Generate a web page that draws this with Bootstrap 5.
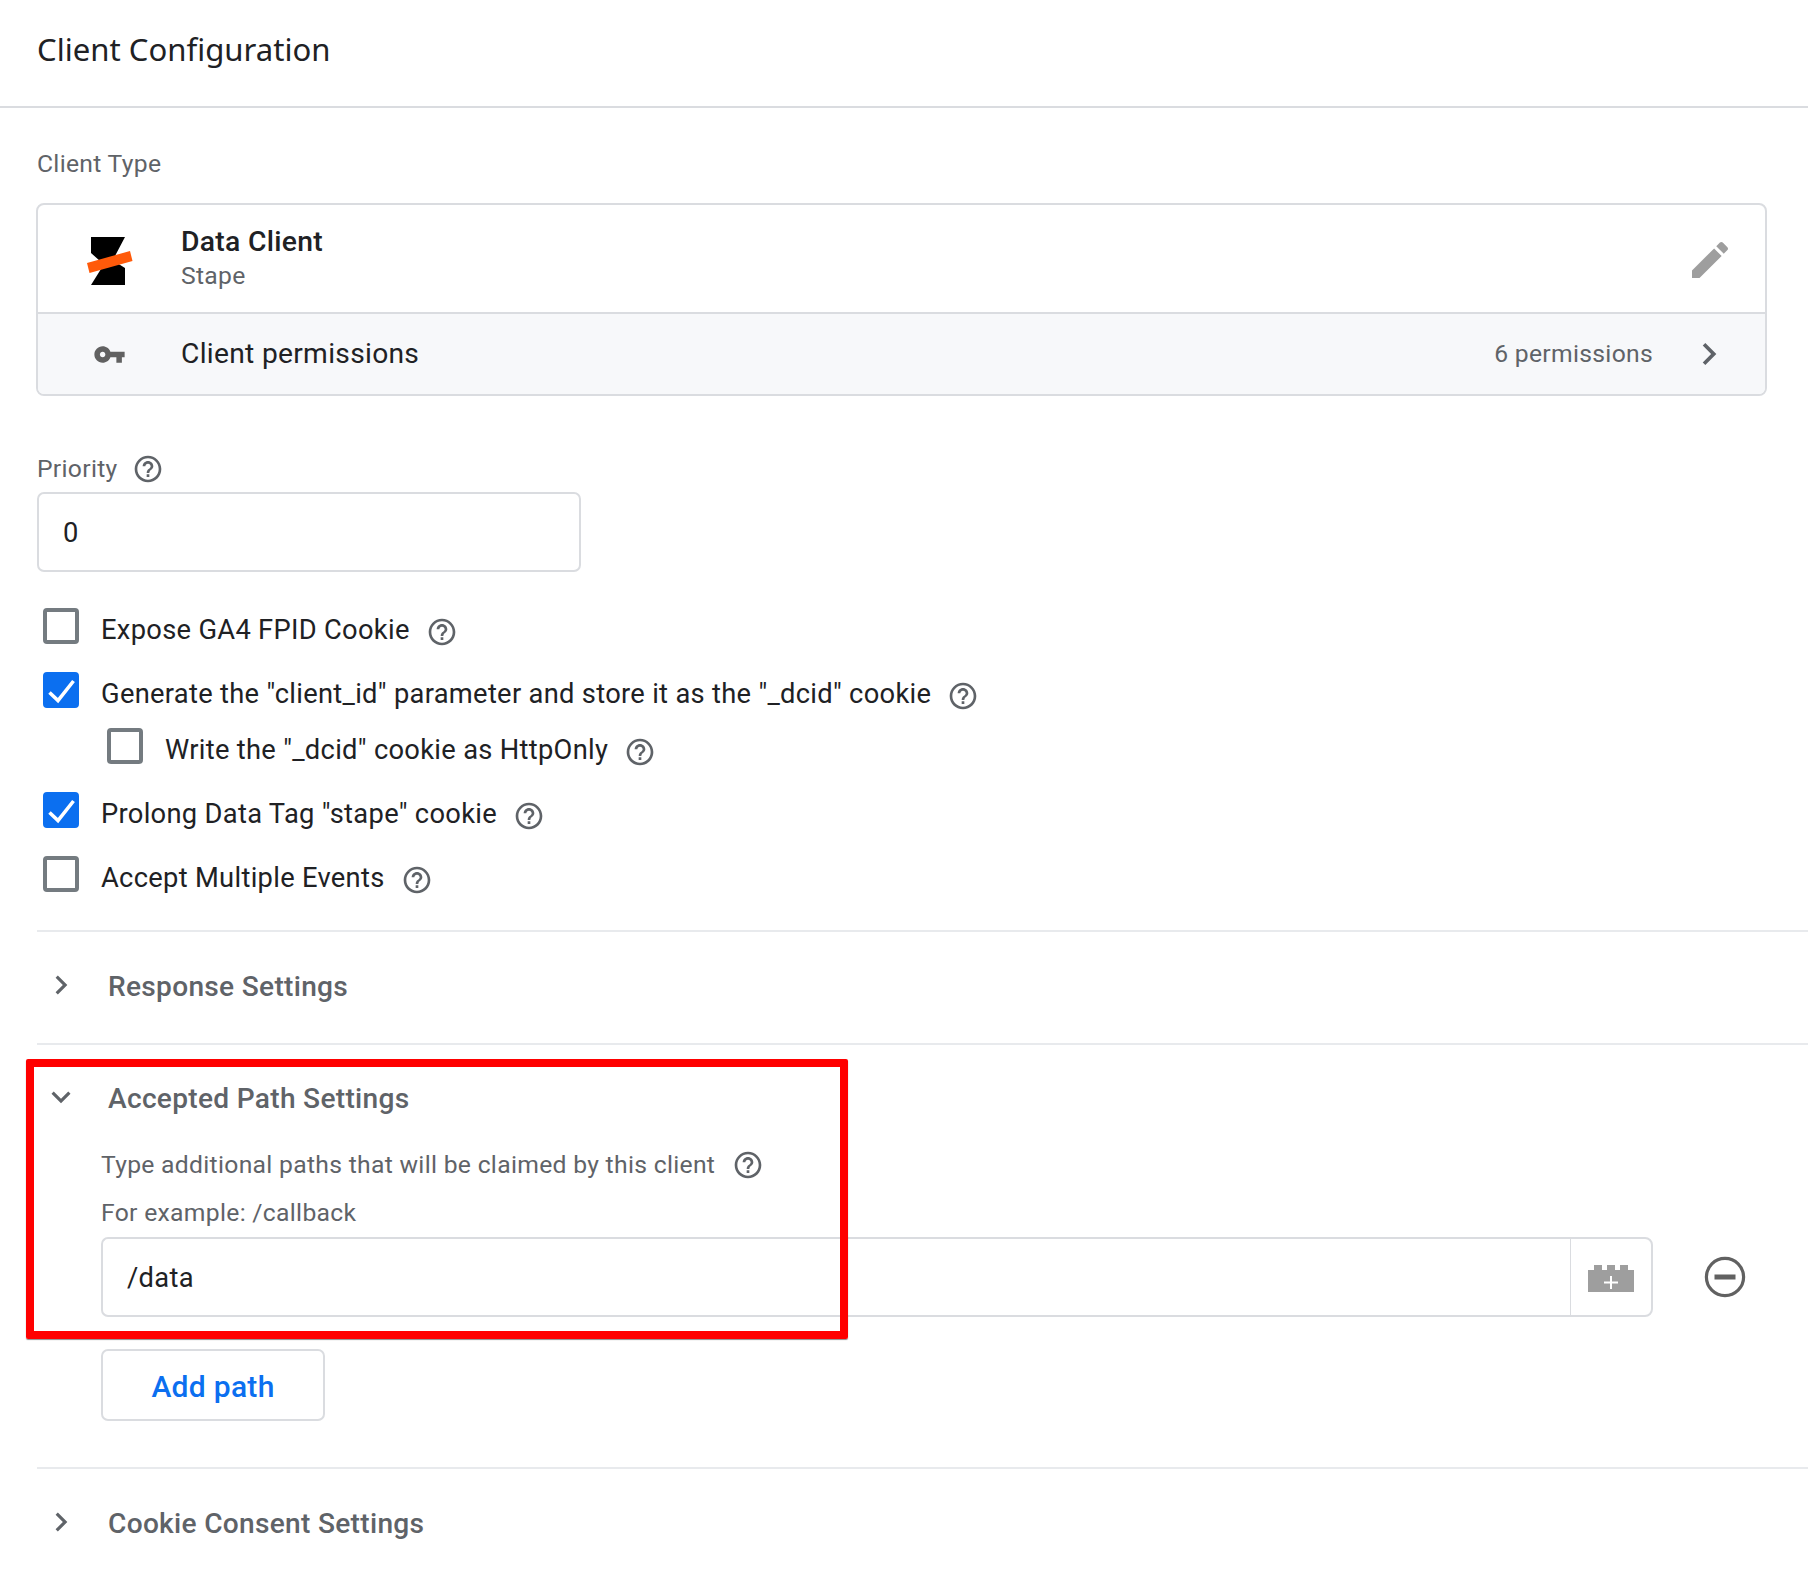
<!DOCTYPE html>
<html lang="en">
<head>
<meta charset="utf-8">
<title>Client Configuration</title>
<link href="https://cdn.jsdelivr.net/npm/bootstrap@5.3.0/dist/css/bootstrap.min.css" rel="stylesheet">
<style>
html,body{height:1570px;overflow:hidden}
body{margin:0;background:#fff;font-family:Roboto,"Liberation Sans",sans-serif;color:#202124;letter-spacing:.3px}
.page-head{height:108px;padding:0 0 8px 37px;border-bottom:2px solid #dadce0;font-family:"Noto Sans",Roboto,sans-serif;font-size:31.100px;letter-spacing:0;color:#202124}
.content-area{padding-left:37px}
.field-label{height:40px;padding-top:1px;line-height:38px;font-size:24.700px;color:#5f6368}
.type-label{margin-top:36px;margin-bottom:19px}
.client-box{margin-left:-1px;margin-right:41px;height:193px;border:2px solid #dadce0;border-radius:8px;overflow:hidden}
.client-main{height:109px;border-bottom:2px solid #dadce0;border-radius:0;padding:0}
.client-perm{height:80px;background:#f7f8fa;padding:0}
.icon-slot{width:143px;flex:none;display:flex;justify-content:center}
.logo-mark{margin-top:4px}
.name-block{padding-top:2px}
.client-name{font-size:28.300px;font-weight:500;line-height:32px;color:#202124}
.client-vendor{font-size:24.700px;line-height:36px;color:#5f6368}
.pencil-mark{margin-right:31px;margin-top:2px}
.perm-title{font-size:28.200px;color:#202124}
.perm-count{font-size:24.700px;color:#5f6368}
.perm-arrow{margin-left:34px;margin-right:34px}
.priority-label{margin-top:52px;margin-bottom:4px;gap:14px}
.value-field.form-control{height:80px;border:2px solid #dadce0;border-radius:7px;font-size:27.300px;color:#202124;padding:2px 24px 0;box-shadow:none;letter-spacing:.3px}
.priority-field{width:544px}
.check-list{margin-top:36px}
.check-row{height:36px;margin-bottom:28px;margin-left:6px;gap:22px}
.check-row.nested{margin-left:70px}
.check-row.tight{margin-bottom:20px}
.check-row .form-check-input{width:36px;height:36px;margin:0;flex:none;border:4px solid #747b80;border-radius:4px;box-shadow:none}
.check-row .form-check-input:checked{background-color:#0b6ff0;border-color:#0b6ff0;background-size:36px 36px;background-position:-4px -4px;background-image:url("data:image/svg+xml,%3csvg xmlns='http://www.w3.org/2000/svg' viewBox='0 0 36 36'%3e%3cpath fill='none' stroke='%23fff' stroke-width='3.6' d='M6.5 20.5l8.5 8L30.5 9'/%3e%3c/svg%3e")}
.check-row label{font-size:27.300px;line-height:44px;color:#202124;white-space:nowrap}
.help-mark{width:32px;height:32px;flex:none;fill:#5f6368;display:block}
.check-row .help-mark{margin-left:-6px;margin-top:8px}
.fold{position:relative;border-top:2px solid #e8eaed}
.fold-head{height:108px;font-size:28.100px;font-weight:500;color:#5f6368;padding-top:2px}
.fold-head.open{height:105px;padding-top:3px}
.fold-first{margin-top:38px;height:113px}
.chev-slot{width:71px;flex:none;padding-left:5px}
.chev-slot svg{width:38px;height:38px;fill:#5f6368;display:block;margin-top:-5px}
.fold-body{padding-left:64px}
.hint-line{height:28px;line-height:28px;font-size:24.700px;color:#5f6368;white-space:nowrap}
.hint-first{gap:17px;padding-top:1px}
.hint-second{margin-top:20px;margin-bottom:11px;line-height:30px}
.path-row{display:flex;align-items:center}
.path-group{flex:1;height:80px}
.path-group .value-field{border-right:0}
.path-group .input-group-text{width:84px;background:#fff;border:2px solid #dadce0;border-radius:0 8px 8px 0;justify-content:center;padding:3px 0 0}
.remove-slot{width:143px;margin-right:12px;flex:none;display:flex;justify-content:center}
.add-path.btn{display:block;margin-top:32px;width:224px;height:72px;border:2px solid #dadce0;border-radius:7px;background:#fff;color:#0b6ff0;font-size:30px;font-weight:500;padding:2px 0 0;letter-spacing:.3px}
.add-wrap{height:118px}
.red-frame{position:absolute;z-index:5;left:-11px;top:14px;width:822px;height:280px;border:8px solid #f00;border-radius:2px;box-shadow:0 1px 1px rgba(0,0,0,.45);pointer-events:none}
</style>
</head>
<body>
<svg width="0" height="0" class="position-absolute">
<symbol id="help" viewBox="0 0 24 24"><path d="M11 18h2v-2h-2v2zm1-16C6.48 2 2 6.48 2 12s4.48 10 10 10 10-4.48 10-10S17.52 2 12 2zm0 18c-4.41 0-8-3.59-8-8s3.59-8 8-8 8 3.59 8 8-3.59 8-8 8zm0-14c-2.21 0-4 1.79-4 4h2c0-1.1.9-2 2-2s2 .9 2 2c0 2-3 1.75-3 5h2c0-2.25 3-2.5 3-5 0-2.21-1.79-4-4-4z"/></symbol>
<symbol id="chev-r" viewBox="0 0 24 24"><path d="M10 6L8.59 7.41 13.17 12l-4.58 4.59L10 18l6-6z"/></symbol>
<symbol id="chev-d" viewBox="0 0 24 24"><path d="M16.59 8.59L12 13.17 7.41 8.59 6 10l6 6 6-6z"/></symbol>
</svg>

<div class="page-head d-flex align-items-center">Client Configuration</div>

<div class="content-area">
  <div class="field-label type-label">Client Type</div>
  <div class="client-box list-group">
    <div class="client-main d-flex align-items-center">
      <div class="icon-slot">
        <svg class="logo-mark" width="46" height="48" viewBox="87 236 46 48">
          <path fill="#000" d="M91 236H125L115 255L117 262L125 267V284H91L101 268L100 260L91 252Z"/>
          <path fill="#ff5a0a" d="M87 262l43-12 2.500 10-43 12z"/>
        </svg>
      </div>
      <div class="name-block flex-grow-1">
        <div class="client-name">Data Client</div>
        <div class="client-vendor">Stape</div>
      </div>
      <svg class="pencil-mark" width="48" height="48" viewBox="0 0 24 24" fill="#9e9e9e"><path d="M3 17.250V21h3.750L17.810 9.940l-3.750-3.750L3 17.250zM20.710 7.040c.39-.39.39-1.020 0-1.410l-2.340-2.340c-.39-.39-1.020-.39-1.410 0l-1.830 1.830 3.750 3.750 1.830-1.830z"/></svg>
    </div>
    <div class="client-perm d-flex align-items-center">
      <div class="icon-slot">
        <svg width="33" height="33" viewBox="0 0 24 24" fill="#616161"><path d="M12.650 10C11.830 7.670 9.610 6 7 6c-3.310 0-6 2.690-6 6s2.690 6 6 6c2.610 0 4.830-1.670 5.650-4H17v4h4v-4h2v-4H12.650zM7 14c-1.100 0-2-.9-2-2s.9-2 2-2 2 .9 2 2-.9 2-2 2z"/></svg>
      </div>
      <div class="perm-title flex-grow-1">Client permissions</div>
      <div class="perm-count">6 permissions</div>
      <svg class="perm-arrow" width="44" height="44" viewBox="0 0 24 24" fill="#5f6368"><use href="#chev-r"/></svg>
    </div>
  </div>

  <div class="field-label priority-label d-flex align-items-center">Priority <svg class="help-mark"><use href="#help"/></svg></div>
  <input class="form-control value-field priority-field" type="text" value="0">

  <div class="check-list">
    <div class="check-row d-flex"><input class="form-check-input" type="checkbox" id="c1"><label for="c1">Expose GA4 FPID Cookie</label><svg class="help-mark"><use href="#help"/></svg></div>
    <div class="check-row tight d-flex"><input class="form-check-input" type="checkbox" id="c2" checked><label for="c2">Generate the "client_id" parameter and store it as the "_dcid" cookie</label><svg class="help-mark"><use href="#help"/></svg></div>
    <div class="check-row nested d-flex"><input class="form-check-input" type="checkbox" id="c3"><label for="c3">Write the "_dcid" cookie as HttpOnly</label><svg class="help-mark"><use href="#help"/></svg></div>
    <div class="check-row d-flex"><input class="form-check-input" type="checkbox" id="c4" checked><label for="c4">Prolong Data Tag "stape" cookie</label><svg class="help-mark"><use href="#help"/></svg></div>
    <div class="check-row d-flex mb-0"><input class="form-check-input" type="checkbox" id="c5"><label for="c5">Accept Multiple Events</label><svg class="help-mark"><use href="#help"/></svg></div>
  </div>

  <div class="fold fold-first">
    <div class="fold-head d-flex align-items-center"><span class="chev-slot"><svg><use href="#chev-r"/></svg></span>Response Settings</div>
  </div>

  <div class="fold">
    <div class="red-frame"></div>
    <div class="fold-head open d-flex align-items-center"><span class="chev-slot"><svg><use href="#chev-d"/></svg></span>Accepted Path Settings</div>
    <div class="fold-body">
      <div class="hint-line hint-first d-flex align-items-center">Type additional paths that will be claimed by this client <svg class="help-mark"><use href="#help"/></svg></div>
      <div class="hint-line hint-second">For example: /callback</div>
      <div class="path-row">
        <div class="input-group path-group">
          <input class="form-control value-field" type="text" value="/data">
          <span class="input-group-text">
            <svg width="46" height="27" viewBox="0 0 46 27"><path fill="#9e9e9e" d="M6 0h8v5h5V0h8v5h5V0h8v5h6v22H0V5h6z"/><path fill="none" stroke="#fff" stroke-width="2" d="M23 11v13M16 17.500h14"/></svg>
          </span>
        </div>
        <div class="remove-slot">
          <svg width="42" height="42" viewBox="0 0 42 42"><circle cx="21" cy="21" r="18.600" fill="none" stroke="#616161" stroke-width="3.200"/><rect x="10.500" y="18.500" width="21" height="5" fill="#616161"/></svg>
        </div>
      </div>
      <div class="add-wrap"><button type="button" class="btn add-path">Add path</button></div>
    </div>
  </div>

  <div class="fold">
    <div class="fold-head d-flex align-items-center"><span class="chev-slot"><svg><use href="#chev-r"/></svg></span>Cookie Consent Settings</div>
  </div>
</div>
<script src="https://cdn.jsdelivr.net/npm/bootstrap@5.3.0/dist/js/bootstrap.bundle.min.js"></script>
</body>
</html>
